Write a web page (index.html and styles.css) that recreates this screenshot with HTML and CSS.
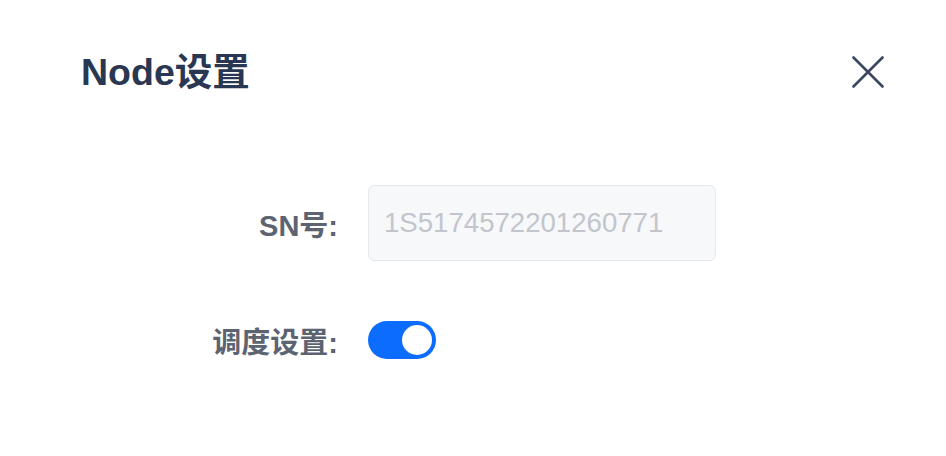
FILE: index.html
```html
<!DOCTYPE html>
<html lang="zh-CN">
<head>
    <meta charset="UTF-8">
    <meta name="viewport" content="width=device-width, initial-scale=1.0">
    <title>Node设置</title>
    <link rel="stylesheet" href="styles.css">
</head>
<body>
    <div class="dialog">
        <div class="dialog-header">
            <span class="dialog-title">Node设置</span>
            <button class="close-btn" aria-label="关闭">
                <svg width="32" height="32" viewBox="0 0 32 32">
                    <path d="M1.5 1.5 L30.5 30.5 M30.5 1.5 L1.5 30.5" stroke="#3a4660" stroke-width="2.6" stroke-linecap="round" fill="none"/>
                </svg>
            </button>
        </div>

        <div class="form">
            <div class="form-row">
                <label class="form-label">SN号:</label>
                <div class="input is-disabled">1S5174572201260771</div>
            </div>
            <div class="form-row">
                <label class="form-label">调度设置:</label>
                <span class="switch is-checked"><span class="switch-knob"></span></span>
            </div>
        </div>
    </div>
</body>
</html>
```

FILE: styles.css
```css
* {
    box-sizing: border-box;
}

body {
    margin: 0;
    background: #fff;
    font-family: "Liberation Sans", Arial, "Noto Sans CJK SC", sans-serif;
}

.dialog {
    width: 946px;
    height: 456px;
    background: #fff;
}

.dialog-header {
    display: flex;
    justify-content: space-between;
    align-items: center;
    padding: 50px 62px 0 81px;
    height: 94px;
}

.dialog-title {
    font-size: 37.5px;
    line-height: 44px;
    font-weight: bold;
    color: #2a3752;
}

.close-btn {
    border: none;
    background: none;
    padding: 0;
    width: 32px;
    height: 32px;
    cursor: pointer;
    display: flex;
}

.form {
    margin-top: 91px;
    display: flex;
    flex-direction: column;
    gap: 41px;
}

.form-row {
    display: flex;
    align-items: center;
    gap: 30px;
    height: 76px;
}

.form-label {
    width: 338px;
    text-align: right;
    font-size: 29px;
    font-weight: bold;
    color: #5c6371;
}

.input {
    width: 348px;
    height: 76px;
    padding: 0 15px;
    display: flex;
    align-items: center;
    font-size: 27.6px;
    border: 1px solid #e6e8ec;
    border-radius: 6px;
}

.input.is-disabled {
    background: #f7f8fa;
    color: #c2c5cc;
}

.switch {
    position: relative;
    display: inline-block;
    width: 68px;
    height: 38px;
    border-radius: 19px;
    background: #dcdfe6;
}

.switch.is-checked {
    background: #0c6cfd;
}

.switch-knob {
    position: absolute;
    top: 4px;
    left: 4px;
    width: 30px;
    height: 30px;
    border-radius: 50%;
    background: #fff;
}

.switch.is-checked .switch-knob {
    left: 34px;
}
```
